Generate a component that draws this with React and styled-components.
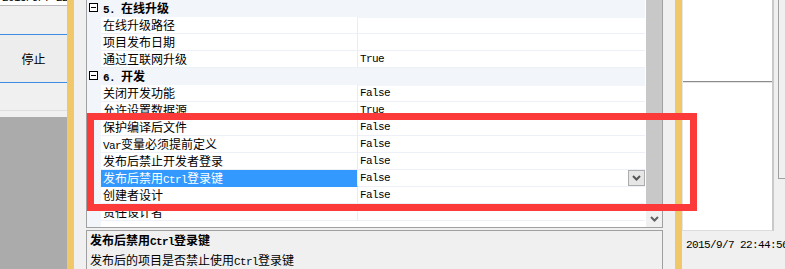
import React from 'react'
import styled, { createGlobalStyle } from 'styled-components'

const PANEL = '#f0f0f0'
const CATEGORY = '#f2f5fa'
const SPLIT = '#f0c86a'
const EDGE = '#a0a0a0'
const RED = '#fc3a3a'

const GlobalStyle = createGlobalStyle`
  html, body {
    margin: 0;
    padding: 0;
    overflow: hidden;
    background: ${ PANEL };
  }
  body {
    font-family: "Noto Sans CJK SC", "Noto Sans", sans-serif;
    font-size: 12px;
    color: #000;
  }
`

const Page = styled.div`
  position: relative;
  display: flex;
  width: 785px;
  height: 269px;
  overflow: hidden;
`

const Latin = styled.span`
  font-family: "Liberation Mono", "DejaVu Sans Mono", monospace;
  font-size: 11px;
  letter-spacing: -0.6px;
`

const runs = (text) =>
  text
    .split(/([A-Za-z0-9./: ]+)/)
    .filter(Boolean)
    .map((part, i) =>
      /^[A-Za-z0-9./: ]+$/.test(part) ? <Latin key={i}>{part}</Latin> : part
    )

/* left pane */

const LeftPane = styled.div`
  width: 67px;
  flex-shrink: 0;
  display: flex;
  flex-direction: column;
  background: #ababab;
`

const TopField = styled.div`
  height: 5px;
  background: #fff;
  border-bottom: 1px solid #b9b9b9;
  overflow: hidden;
  padding-left: 2px;
`

const FieldText = styled.div`
  margin-top: -11px;
  line-height: 14px;
  white-space: nowrap;
`

const ToolStrip = styled.div`
  height: ${ p => p.$h }px;
  background: ${ PANEL };
  border-bottom: ${ p => (p.$line ? '1px solid #dedede' : 'none') };
  box-sizing: border-box;
`

const StopButton = styled.div`
  height: 49px;
  box-sizing: border-box;
  border-top: 1px solid #3c8ce6;
  border-bottom: 1px solid #3c8ce6;
  background: #ededed;
  display: flex;
  align-items: center;
  justify-content: center;
  padding-bottom: 1px;
`

const Splitter = styled.div`
  width: 7px;
  flex-shrink: 0;
  background: ${ SPLIT };
`

/* property grid */

const MiddlePane = styled.div`
  width: 601px;
  flex-shrink: 0;
  box-sizing: border-box;
  padding: 0 12px;
  display: flex;
  flex-direction: column;
  background: ${ PANEL };
`

const Grid = styled.div`
  margin-top: -1px;
  height: 229px;
  flex-shrink: 0;
  box-sizing: border-box;
  border: 1px solid ${ EDGE };
  background: #fff;
  display: flex;
`

const Rows = styled.div`
  width: 558px;
  display: flex;
  flex-direction: column;
  background: linear-gradient(to right, ${ CATEGORY } 14px, #fff 14px);
`

const Row = styled.div`
  display: grid;
  grid-template-columns: 14px 257px 287px;
  height: 17px;
  flex-shrink: 0;
`

const MarginCell = styled.div`
  background: ${ CATEGORY };
  display: flex;
  align-items: flex-start;
  padding: 3px 0 0 2px;
  box-sizing: border-box;
`

const CollapseBox = styled.div`
  width: 9px;
  height: 9px;
  box-sizing: border-box;
  border: 1px solid #000;
  background: #fff;
  display: flex;
  align-items: center;
  justify-content: center;

  &::after {
    content: '';
    width: 5px;
    height: 1px;
    background: #000;
  }
`

const CategoryLabel = styled.div`
  grid-column: span 2;
  background: ${ CATEGORY };
  font-weight: 700;
  line-height: 16px;
  padding-left: 2px;
`

const NameCell = styled.div`
  box-sizing: border-box;
  padding-left: 2px;
  line-height: 16px;
  white-space: nowrap;
  overflow: hidden;
  border-right: 1px solid #e8ecf3;
  border-bottom: 1px solid ${ p => (p.$selected ? '#3399ff' : '#edf1f7') };
  background: ${ p => (p.$selected ? '#3399ff' : '#fff') };
  color: ${ p => (p.$selected ? '#fff' : '#000') };
`

const ValueCell = styled.div`
  box-sizing: border-box;
  padding-left: 2px;
  line-height: 16px;
  border-bottom: 1px solid #edf1f7;
  display: flex;
  justify-content: space-between;
  align-items: flex-start;
`

const DropButton = styled.div`
  width: 17px;
  height: 16px;
  box-sizing: border-box;
  border: 1px solid #adadad;
  background: #e6e6e6;
  display: flex;
  align-items: center;
  justify-content: center;
`

const ScrollBar = styled.div`
  width: 17px;
  box-sizing: border-box;
  border-left: 1px solid #fff;
  display: flex;
  flex-direction: column;
`

const Thumb = styled.div`
  flex: 1;
  background: #c8c8c8;
`

const ArrowBox = styled.div`
  height: 16px;
  background: ${ PANEL };
  display: flex;
  align-items: center;
  justify-content: center;
`

const HelpPanel = styled.div`
  margin-top: 2px;
  flex: 1;
  border: 1px solid ${ EDGE };
  border-bottom: none;
  background: ${ PANEL };
  padding-left: 3px;
`

const HelpTitle = styled.div`
  font-weight: 700;
  line-height: 17px;
`

const HelpText = styled.div`
  line-height: 17px;
`

/* right pane */

const RightPane = styled.div`
  flex: 1;
  display: flex;
  flex-direction: column;
  background: ${ PANEL };
`

const RightTop = styled.div`
  height: 231px;
  display: flex;
`

const WhiteColumn = styled.div`
  width: 92px;
  box-sizing: border-box;
  border-left: 1px solid #e6e6e6;
  border-right: 2px solid #c9c9c9;
  border-bottom: 1px solid #dcdcdc;
  display: flex;
  flex-direction: column;
`

const WhitePanel = styled.div`
  height: ${ p => (p.$h ? `${ p.$h }px` : 'auto') };
  flex: ${ p => (p.$h ? 'none' : 1) };
  background: #fff;
`

const PanelDivider = styled.div`
  height: 2px;
  box-sizing: border-box;
  border-top: 1px solid #8c8c8c;
  background: #e4e4e4;
`

const SideColumn = styled.div`
  flex: 1;
  padding-left: 4px;
`

const SideBox = styled.div`
  height: 178px;
  border-left: 1px solid ${ EDGE };
  border-bottom: 1px solid ${ EDGE };
  padding-left: 4px;
  line-height: 13px;
  white-space: nowrap;
`

const Stamp = styled.div`
  padding: 4px 0 0 4px;
  line-height: 16px;
  white-space: nowrap;
`

const Annotation = styled.div`
  position: absolute;
  left: 87px;
  top: 113px;
  width: 610px;
  height: 98px;
  box-sizing: border-box;
  border: 7px solid ${ RED };
  pointer-events: none;
`

const Chevron = ({ color = '#555' }) => (
  <svg width="9" height="6" viewBox="0 0 9 6">
    <path d="M1 1 L4.5 4.5 L8 1" stroke={color} strokeWidth="2" fill="none" />
  </svg>
)

const rows = [
  { cat: '5. 在线升级' },
  { name: '在线升级路径', value: '' },
  { name: '项目发布日期', value: '' },
  { name: '通过互联网升级', value: 'True' },
  { cat: '6. 开发' },
  { name: '关闭开发功能', value: 'False' },
  { name: '允许设置数据源', value: 'True' },
  { name: '保护编译后文件', value: 'False' },
  { name: 'Var变量必须提前定义', value: 'False' },
  { name: '发布后禁止开发者登录', value: 'False' },
  { name: '发布后禁用Ctrl登录键', value: 'False', selected: true },
  { name: '创建者设计', value: 'False' },
  { name: '责任设计者', value: '' },
]

const App = () => {
  return (
    <Page>
      <GlobalStyle />
      <LeftPane>
        <TopField>
          <FieldText><Latin>2015/9/7 22:4</Latin></FieldText>
        </TopField>
        <ToolStrip $h={28} />
        <StopButton>停止</StopButton>
        <ToolStrip $h={28} $line />
        <ToolStrip $h={6} />
      </LeftPane>
      <Splitter />
      <MiddlePane>
        <Grid>
          <Rows>
            {rows.map((row, i) =>
              row.cat ? (
                <Row key={i}>
                  <MarginCell><CollapseBox /></MarginCell>
                  <CategoryLabel>{runs(row.cat)}</CategoryLabel>
                </Row>
              ) : (
                <Row key={i}>
                  <MarginCell />
                  <NameCell $selected={row.selected}>{runs(row.name)}</NameCell>
                  <ValueCell>
                    <Latin>{row.value}</Latin>
                    {row.selected && (
                      <DropButton><Chevron /></DropButton>
                    )}
                  </ValueCell>
                </Row>
              )
            )}
          </Rows>
          <ScrollBar>
            <Thumb />
            <ArrowBox><Chevron color="#606060" /></ArrowBox>
          </ScrollBar>
        </Grid>
        <HelpPanel>
          <HelpTitle>{runs('发布后禁用Ctrl登录键')}</HelpTitle>
          <HelpText>{runs('发布后的项目是否禁止使用Ctrl登录键')}</HelpText>
        </HelpPanel>
      </MiddlePane>
      <Splitter />
      <RightPane>
        <RightTop>
          <WhiteColumn>
            <WhitePanel $h={81} />
            <PanelDivider />
            <WhitePanel />
          </WhiteColumn>
          <SideColumn>
            <SideBox>
              <Latin>:</Latin><br /><Latin>:</Latin>
            </SideBox>
          </SideColumn>
        </RightTop>
        <Stamp><Latin>2015/9/7 22:44:56</Latin></Stamp>
      </RightPane>
      <Annotation />
    </Page>
  )
}

export default App
